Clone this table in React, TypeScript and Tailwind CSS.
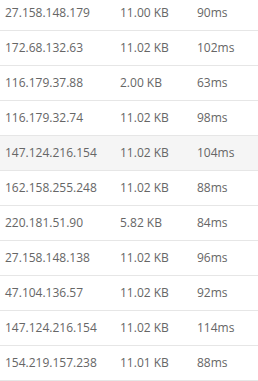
const rows = [
  ["27.158.148.179", "11.00 KB", "90ms"],
  ["172.68.132.63", "11.02 KB", "102ms"],
  ["116.179.37.88", "2.00 KB", "63ms"],
  ["116.179.32.74", "11.02 KB", "98ms"],
  ["147.124.216.154", "11.02 KB", "104ms"],
  ["162.158.255.248", "11.02 KB", "88ms"],
  ["220.181.51.90", "5.82 KB", "84ms"],
  ["27.158.148.138", "11.02 KB", "96ms"],
  ["47.104.136.57", "11.02 KB", "92ms"],
  ["147.124.216.154", "11.02 KB", "114ms"],
  ["154.219.157.238", "11.01 KB", "88ms"],
];

export default function App() {
  return (
    <div className="w-[258px] h-[381px] overflow-hidden bg-white text-[12px] text-[#666] font-['Open_Sans',sans-serif]">
      <div className="-mt-[4px]">
        {rows.map((r, i) => (
          <div
            key={i}
            className={`flex items-center h-[35px] border-b border-[#e6e6e6] ${i === 4 ? "bg-[#f5f5f5]" : ""}`}
          >
            <div className="w-[120px] pl-[5px]">{r[0]}</div>
            <div className="w-[77px]">{r[1]}</div>
            <div>{r[2]}</div>
          </div>
        ))}
      </div>
    </div>
  );
}
